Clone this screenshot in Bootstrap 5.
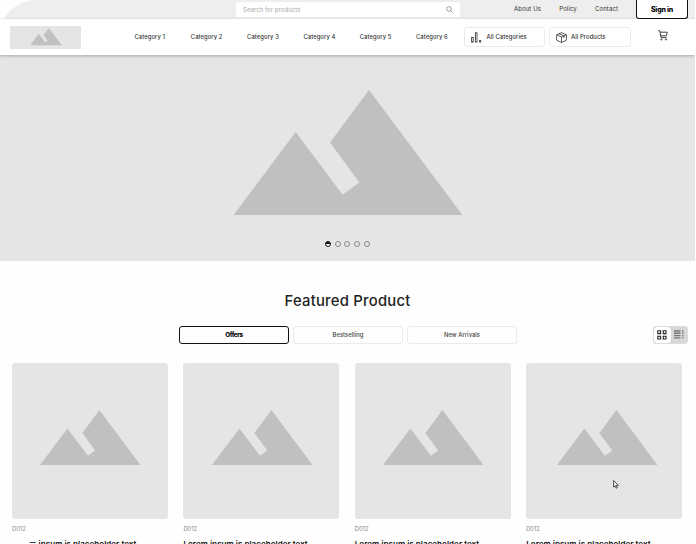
<!DOCTYPE html>
<html lang="en">
<head>
<meta charset="utf-8">
<meta name="viewport" content="width=device-width, initial-scale=1">
<title>Featured Product</title>
<link href="https://cdn.jsdelivr.net/npm/bootstrap@5.3.0/dist/css/bootstrap.min.css" rel="stylesheet">
<style>
body{font-family:Inter,"Liberation Sans",sans-serif;font-size:5.8px;line-height:1;color:#333;height:544px;background:#fefefe}
svg{display:block;flex:none}
a{color:inherit;text-decoration:none;white-space:nowrap}
.page-shell{width:695px;height:544px}
.top-strip{height:19px;background:#eee;clip-path:path('M4 19 Q11 5 32 0 H695 V19 Z')}
.search-box{margin:2px 0 0 236px;width:224px;height:15px;background:#fff;border-radius:2px;padding:0 7px;color:#aaa;font-size:6px;letter-spacing:.06px}
.top-links{margin-left:54px;width:104px;height:18px;font-size:6px;letter-spacing:.1px}
.sign-in{margin-left:18px;width:52px;height:19px;background:#fff;border:1px solid #111;border-top:0;border-radius:0 0 3px 3px;color:#000;font-weight:800;font-size:7px;letter-spacing:-.2px}
.main-bar{height:36px;background:#fff;padding:0 0 0 10px;box-shadow:0 1px 3px #0004;position:relative}
.logo-tile{width:71px;height:23px;background:#e5e5e5;padding-left:19.5px}
.cats{margin-left:53.5px;display:grid;grid-template-columns:repeat(6,56.3px);width:329.5px;font-weight:500;letter-spacing:.1px}
.pill{height:20px;width:81px;border:1px solid #ebebeb;border-radius:3px;background:#fff;letter-spacing:.1px;padding-left:6px;gap:4.5px;font-weight:500}
.pill+.pill{width:82px;margin-left:4px;padding-left:5.5px}
.cart{margin:-3px 0 0 26.5px}
.hero{height:206px;background:#e5e5e5;padding-top:34.7px}
.hero-pic{margin-left:232.5px}
.dots{margin:25.3px 0 0 325px;gap:3.7px}
.dot{width:6px;height:6px;border:1px solid #888;border-radius:50%}
.dot.on{border-color:#111;background:linear-gradient(#111 45%,#fff 45%)}
.headline{margin:31px 0 0;font-size:14.8px;line-height:18px;font-weight:500;color:#222;letter-spacing:.25px}
.tabs-row{margin:15.5px 0 0 179px;height:18px}
.tab-btn{width:110px;height:18px;border:1px solid #ebebeb;border-radius:3px;font-weight:500;color:#444;margin-right:4px;letter-spacing:.05px}
.tab-btn.on{border-color:#111;color:#000;font-weight:800;letter-spacing:-.3px;font-size:6.2px;padding-top:1px}
.views{margin-left:136px;width:35px;height:18px;border:1px solid #ddd;border-radius:3px;background:#d8d8d8;overflow:hidden}
.views>span{height:16px}
.prods{margin:19px 0 0 12px;display:grid;grid-template-columns:repeat(4,156px);column-gap:15.4px}
.pic{height:156.8px;background:#e5e5e5;border-radius:3px;padding:47.5px 0 0 28.3px}
article:last-child .pic{padding-left:31px}
.code{margin-top:6.6px;color:#888;font-size:5.8px;line-height:6px}
.pname{margin-top:6.9px;font-size:8px;line-height:10px;font-weight:600;color:#111;white-space:nowrap;letter-spacing:.04px}
.hid{opacity:0}
.cut{display:inline-block;clip-path:inset(0 0 58% 0)}
.pointer{position:absolute;left:612.5px;top:480px}
</style>
<script src="https://cdn.jsdelivr.net/npm/bootstrap@5.3.0/dist/js/bootstrap.bundle.min.js"></script>
</head>
<body class="overflow-hidden">
<svg width="0" height="0" class="position-absolute"><symbol id="peaks" viewBox="0 0 690 377"><path fill="#c0c0c0" d="M0 377 188 126 329 314 379 277 291 157 408 0 690 377Z"/></symbol></svg>
<div class="page-shell position-relative overflow-hidden">
<header>
<div class="top-strip d-flex align-items-start">
<div class="search-box d-flex align-items-center justify-content-between"><span>Search for products</span>
<svg width="7" height="7" viewBox="0 0 7 7" fill="none" stroke="#888" stroke-width=".8"><circle cx="2.9" cy="2.9" r="2.3"/><path d="M4.6 4.6 6.7 6.7"/></svg></div>
<nav class="top-links d-flex align-items-center justify-content-between"><a href="#">About Us</a><a href="#">Policy</a><a href="#">Contact</a></nav>
<a href="#" class="sign-in d-flex align-items-center justify-content-center">Sign in</a>
</div>
<div class="main-bar d-flex align-items-center">
<div class="logo-tile d-flex align-items-center"><svg width="32" height="17.5"><use href="#peaks"/></svg></div>
<nav class="cats"><a href="#">Category 1</a><a href="#">Category 2</a><a href="#">Category 3</a><a href="#">Category 4</a><a href="#">Category 5</a><a href="#">Category 6</a></nav>
<a href="#" class="pill d-flex align-items-center"><svg width="11" height="11" viewBox="0 0 11 11" fill="none" stroke="#333" stroke-width=".8"><rect x=".6" y="5.5" width="1.6" height="4.6"/><rect x="4.4" y=".8" width="1.6" height="9.3"/><rect x="8.4" y="8.6" width="1.4" height="1.4"/></svg><span>All Categories</span></a>
<a href="#" class="pill d-flex align-items-center"><svg width="11" height="11" viewBox="0 0 11 11" fill="none" stroke="#333" stroke-width=".8" stroke-linejoin="round"><path d="M5.5.6 10.4 2.8V8.2L5.5 10.5.6 8.2V2.8ZM.6 2.8 5.5 5 10.4 2.8M5.5 5V10.5M3 1.7 8 3.9V6"/></svg><span>All Products</span></a>
<svg class="cart" width="10" height="11" viewBox="0 0 10 11" fill="none" stroke="#444" stroke-width="1"><path d="M.2.7H1.8L3 7.6H8.6M2.2 2.2H9.3L8.4 5.8H3"/><circle cx="3.4" cy="9.5" r=".6"/><circle cx="8" cy="9.5" r=".6"/></svg>
</div>
</header>
<section class="hero"><svg class="hero-pic" width="230" height="125.8"><use href="#peaks"/></svg>
<div class="dots d-flex"><span class="dot on"></span><span class="dot"></span><span class="dot"></span><span class="dot"></span><span class="dot"></span></div></section>
<main>
<h2 class="headline text-center">Featured Product</h2>
<div class="tabs-row d-flex">
<a href="#" class="tab-btn on d-flex align-items-center justify-content-center">Offers</a><a href="#" class="tab-btn d-flex align-items-center justify-content-center">Bestselling</a><a href="#" class="tab-btn d-flex align-items-center justify-content-center me-0">New Arrivals</a>
<div class="views d-flex"><span class="w-50 bg-white rounded-1 d-flex align-items-center justify-content-center"><svg width="10" height="10" viewBox="0 0 10 10" fill="none" stroke="#222" stroke-width="1.1"><path d="M.8.8H3.6V3.6H.8ZM6.2.8H9V3.6H6.2ZM.8 6.2H3.6V9H.8ZM6.2 6.2H9V9H6.2Z"/></svg></span><span class="w-50 d-flex align-items-center justify-content-center"><svg width="10" height="9" viewBox="0 0 10 9" stroke="#777" stroke-width="1.4"><path d="M0 1H6.5M0 3.3H6.5M0 5.6H6.5M0 7.9H6.5M8 1H9.5M8 3.3H9.5M8 5.6H9.5M8 7.9H9.5"/></svg></span></div>
</div>
<div class="prods">
<article><div class="pic"><svg width="100.5" height="55"><use href="#peaks"/></svg></div><div class="code">D012</div><div class="pname"><span class="hid">Lore</span><span class="cut">m</span> ipsum is placeholder text</div></article>
<article><div class="pic"><svg width="100.5" height="55"><use href="#peaks"/></svg></div><div class="code">D012</div><div class="pname">Lorem ipsum is placeholder text</div></article>
<article><div class="pic"><svg width="100.5" height="55"><use href="#peaks"/></svg></div><div class="code">D012</div><div class="pname">Lorem ipsum is placeholder text</div></article>
<article><div class="pic"><svg width="100.5" height="55"><use href="#peaks"/></svg></div><div class="code">D012</div><div class="pname">Lorem ipsum is placeholder text</div></article>
</div>
</main>
<svg class="pointer" width="6" height="9" viewBox="0 0 6 9" fill="#fff" stroke="#222" stroke-width=".8"><path d="M.6.6V7L2.1 5.7 3.1 8.2 4.3 7.7 3.3 5.3H5.3Z"/></svg>
</div>
</body>
</html>
